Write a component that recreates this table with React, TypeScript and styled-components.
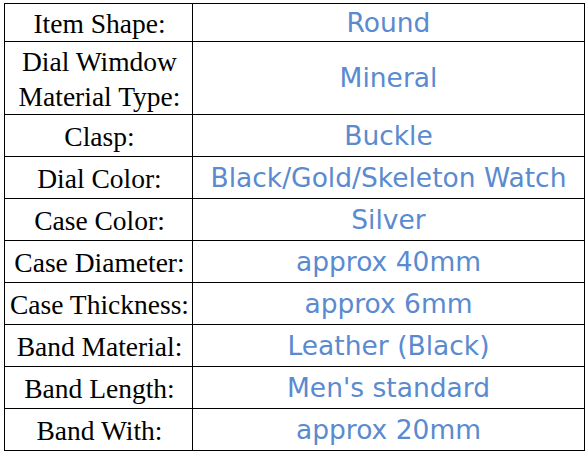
import { ReactElement } from 'react';
import styled, { createGlobalStyle } from 'styled-components';

const GlobalStyle = createGlobalStyle`
  html, body {
    margin: 0;
    padding: 0;
    background: #ffffff;
  }
`;

/**
 * Sheet area around the spec table
 */
const Sheet = styled.div`
  width: 587px;
  height: 454px;
  padding: 3px 0 0 4px;
  box-sizing: border-box;
  background: #ffffff;
`;

const SpecTable = styled.table`
  width: 581px;
  border-collapse: collapse;
  table-layout: fixed;
`;

interface SpecRowProps {
  /**
   * Row height in pixels
   */
  $height: number;
}

const SpecRow = styled.tr<SpecRowProps>`
  height: ${ props => props.$height }px;
`;

const LabelCell = styled.td`
  width: 185px;
  padding: 2px 0 0 2px;
  border: 1px solid #000000;

  font-family: "Liberation Serif", "Times New Roman", serif;
  font-size: 27.5px;
  line-height: 35px;
  color: #000000;
  text-align: center;
  vertical-align: middle;
  white-space: nowrap;
`;

const ValueCell = styled.td`
  padding: 0;
  border: 1px solid #000000;

  font-family: "DejaVu Sans", sans-serif;
  font-size: 26.5px;
  line-height: 32px;
  color: #5a8acf;
  text-align: center;
  vertical-align: middle;
  white-space: nowrap;
`;

interface Spec {
  label: string[];
  value: string;
  height: number;
}

const specs: Spec[] = [
  { label: ['Item Shape:'], value: 'Round', height: 38 },
  { label: ['Dial Wimdow', 'Material Type:'], value: 'Mineral', height: 73 },
  { label: ['Clasp:'], value: 'Buckle', height: 42 },
  { label: ['Dial Color:'], value: 'Black/Gold/Skeleton Watch', height: 42 },
  { label: ['Case Color:'], value: 'Silver', height: 42 },
  { label: ['Case Diameter:'], value: 'approx 40mm', height: 42 },
  { label: ['Case Thickness:'], value: 'approx 6mm', height: 42 },
  { label: ['Band Material:'], value: 'Leather (Black)', height: 42 },
  { label: ['Band Length:'], value: "Men's standard", height: 42 },
  { label: ['Band With:'], value: 'approx 20mm', height: 42 },
];

function App(): ReactElement {
  return (
    <>
      <GlobalStyle />
      <Sheet>
        <SpecTable>
          <tbody>
            {specs.map((spec, key) => (
              <SpecRow $height={spec.height} key={key}>
                <LabelCell>
                  {spec.label.map((line, i) => <div key={i}>{line}</div>)}
                </LabelCell>
                <ValueCell>{spec.value}</ValueCell>
              </SpecRow>
            ))}
          </tbody>
        </SpecTable>
      </Sheet>
    </>
  );
}

export default App;
